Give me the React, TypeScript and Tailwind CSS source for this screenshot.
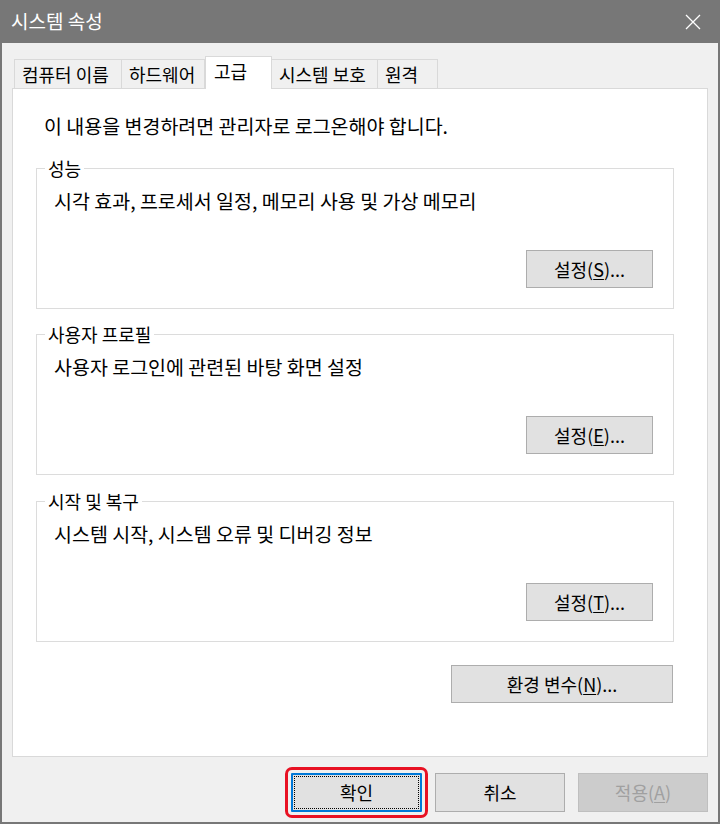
import { ReactNode } from "react";

const tabs = [
  { label: "컴퓨터 이름", w: "w-[108px]" },
  { label: "하드웨어", w: "w-[83px]" },
  { label: "고급", w: "w-[67px]", active: true },
  { label: "시스템 보호", w: "w-[106px]" },
  { label: "원격", w: "w-[60px]" },
];

function Mnemonic({ pre, k, post }: { pre: string; k: string; post: string }) {
  return (
    <span>
      {pre}(<span className="underline underline-offset-2">{k}</span>){post}
    </span>
  );
}

function Btn({
  children,
  w = "w-[127px]",
  disabled,
}: {
  children: ReactNode;
  w?: string;
  disabled?: boolean;
}) {
  return (
    <button
      className={
        w +
        " h-[38px] border flex items-center justify-center " +
        (disabled
          ? "bg-[#cccccc] border-[#bfbfbf] text-[#a0a0a0]"
          : "bg-[#e1e1e1] border-[#adadad] text-black")
      }
    >
      {children}
    </button>
  );
}

function Group({
  title,
  desc,
  mn,
}: {
  title: string;
  desc: string;
  mn: string;
}) {
  return (
    <div className="relative ml-[23px] mr-[33px] h-[141px] border border-[#dcdcdc] flex flex-col pl-[17px] pr-[20px] pt-[20px] pb-[20px]">
      <span className="absolute left-[8px] top-[-13px] bg-white px-[3px] leading-[24px]">
        {title}
      </span>
      <p className="leading-[24px] text-[19.5px]">{desc}</p>
      <div className="mt-auto flex justify-end">
        <Btn>
          <Mnemonic pre="설정" k={mn} post="..." />
        </Btn>
      </div>
    </div>
  );
}

export default function App() {
  return (
    <div
      className="w-[720px] h-[824px] bg-[#f0f0f0] border-x-2 border-b-2 border-[#777777] flex flex-col text-[18px] text-black"
      style={{ fontFamily: '"Noto Sans CJK KR", "Noto Sans", sans-serif' }}
    >
      {/* title bar */}
      <div className="h-[43px] -mx-[2px] bg-[#777777] flex items-center justify-between pl-[11px] pr-[19px] text-white">
        <span className="text-[19px]">시스템 속성</span>
        <svg width="16" height="16" viewBox="0 0 16 16">
          <path d="M1 1 L15 15 M15 1 L1 15" stroke="#fff" strokeWidth="1.3" />
        </svg>
      </div>

      <div className="px-[10px] pt-[13px]">
        {/* tabs */}
        <div className="flex items-end h-[32px] pl-[2px]">
          {tabs.map((t) =>
            t.active ? (
              <div
                key={t.label}
                className={
                  t.w +
                  " h-[33px] -mb-px relative z-10 bg-white border border-b-0 border-[#d9d9d9] pl-[8px] leading-[28px]"
                }
              >
                {t.label}
              </div>
            ) : (
              <div
                key={t.label}
                className={
                  t.w +
                  " h-[29px] bg-[#f0f0f0] border border-b-0 border-l-0 first:border-l border-[#d9d9d9] pl-[7px] leading-[29px]"
                }
              >
                {t.label}
              </div>
            )
          )}
        </div>

        {/* panel */}
        <div className="h-[669px] bg-white border border-[#d9d9d9] flex flex-col">
          <p className="mt-[25px] pl-[31px] leading-[24px] text-[19.5px]">
            이 내용을 변경하려면 관리자로 로그온해야 합니다.
          </p>
          <div className="mt-[30px]">
            <Group
              title="성능"
              desc="시각 효과, 프로세서 일정, 메모리 사용 및 가상 메모리"
              mn="S"
            />
          </div>
          <div className="mt-[25px]">
            <Group title="사용자 프로필" desc="사용자 로그인에 관련된 바탕 화면 설정" mn="E" />
          </div>
          <div className="mt-[26px]">
            <Group title="시작 및 복구" desc="시스템 시작, 시스템 오류 및 디버깅 정보" mn="T" />
          </div>
          <div className="mt-[23px] flex justify-end pr-[34px]">
            <Btn w="w-[222px]">
              <Mnemonic pre="환경 변수" k="N" post="..." />
            </Btn>
          </div>
        </div>

        {/* bottom buttons */}
        <div className="mt-[16px] flex justify-end gap-[13px]">
          <button className="relative w-[131px] h-[39px] bg-[#e1e1e1] border-2 border-[#0078d7] rounded-[1px] outline-[3px] outline-[#e81123] outline-offset-[3px]">
            <span className="absolute inset-[1px] border border-dotted border-black" />
            확인
          </button>
          <button className="w-[130px] h-[39px] bg-[#e1e1e1] border border-[#adadad]">
            취소
          </button>
          <Btn w="w-[130px] !h-[39px]" disabled>
            <Mnemonic pre="적용" k="A" post="" />
          </Btn>
        </div>
      </div>
    </div>
  );
}
